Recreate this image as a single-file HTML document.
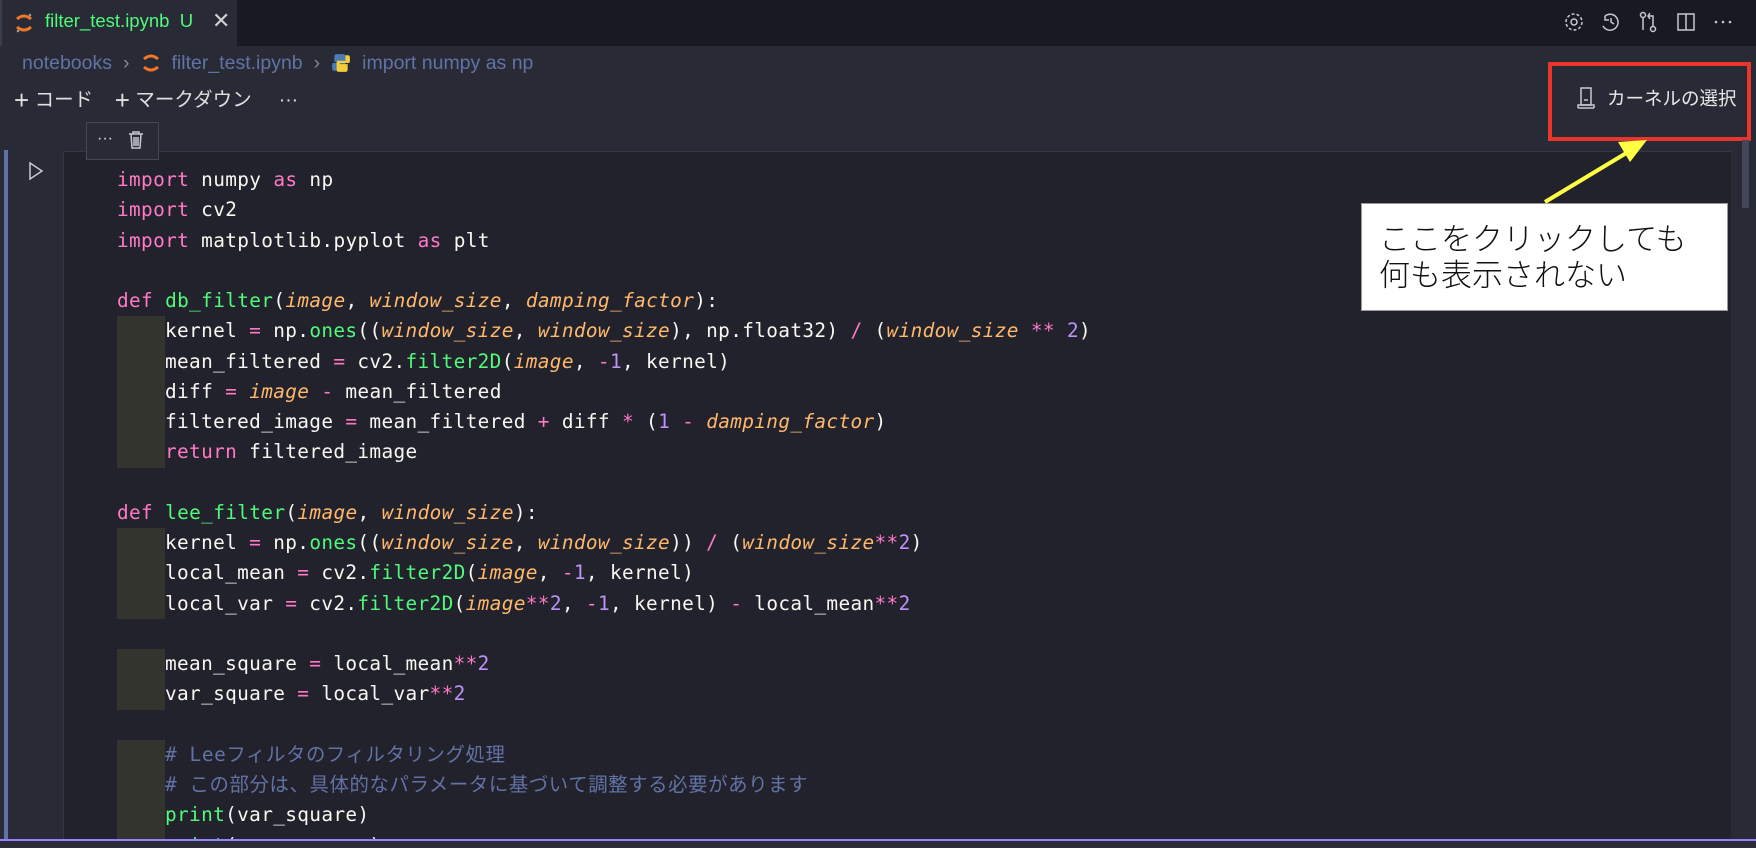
<!DOCTYPE html>
<html><head><meta charset="utf-8"><style>
*{margin:0;padding:0;box-sizing:border-box}
body{width:1756px;height:848px;overflow:hidden;background:#282a36;position:relative;font-family:"Liberation Sans","Noto Sans CJK JP",sans-serif;color:#f8f8f2}
.abs{position:absolute}
#tabbar{left:0;top:0;width:1756px;height:46px;background:#191a21}
#tab{left:0;top:0;width:237px;height:46px;background:#282a36;border-left:2px solid #3a3c4e}
#clip{position:absolute;left:0;top:0;width:1756px;height:839px;overflow:hidden}
pre{position:absolute;left:117px;top:165px;font-family:"DejaVu Sans Mono","Liberation Mono","Noto Sans CJK JP",monospace;font-size:19.4px;line-height:30.25px;color:#f8f8f2;letter-spacing:0.35px}
.k{color:#ff79c6}.f{color:#50fa7b}.p{color:#ffb86c;font-style:italic}.n{color:#bd93f9}.c{color:#6272a4;font-family:"DejaVu Sans Mono","Noto Sans CJK JP",monospace;letter-spacing:0.6px}
.i{background:#34342f;display:inline-block;width:48px;height:30.25px;vertical-align:top}
.ic{stroke:#c5c8d3;fill:none;stroke-width:1.5}
.bc{display:flex;align-items:center;white-space:nowrap}
.bc span{margin-right:11px}
.bc svg{margin-right:11px}
</style></head><body>
<div id="tabbar" class="abs"></div>
<div id="tab" class="abs"></div>
<svg class="abs" style="left:14px;top:12px" width="20" height="22" viewBox="0 0 20 22"><path d="M3 7 Q10 1 17 7" stroke="#f37726" stroke-width="3" fill="none"/><path d="M3 15 Q10 21 17 15" stroke="#f37726" stroke-width="3" fill="none"/><circle cx="16" cy="3" r="1.3" fill="#999"/><circle cx="4" cy="19" r="1.3" fill="#999"/></svg>
<div class="abs" style="left:45px;top:10px;font-size:18.5px;color:#50fa7b">filter_test.ipynb&nbsp; U</div>
<div class="abs" style="left:212px;top:8px;font-size:22px;color:#d0d0d0">✕</div>
<svg class="abs" style="left:1562px;top:10px" width="180" height="24" viewBox="0 0 180 24">
<circle cx="12" cy="12" r="3" class="ic"/><circle cx="12" cy="12" r="8" class="ic" stroke-dasharray="3 2"/>
<path d="M43 6 A8 8 0 1 1 41 16 M43 6 L43 10 L47 10 M49 8 L49 12 L52 14" class="ic"/>
<circle cx="81" cy="5" r="2.5" class="ic"/><circle cx="91" cy="19" r="2.5" class="ic"/><path d="M81 8 V20 M91 16 V6 H86 M88 3 L86 6 L88 9" class="ic"/>
<rect x="116" y="4" width="16" height="16" class="ic"/><path d="M124 4 V20" class="ic"/>
<circle cx="154" cy="12" r="1.3" fill="#c5c8d3"/><circle cx="161" cy="12" r="1.3" fill="#c5c8d3"/><circle cx="168" cy="12" r="1.3" fill="#c5c8d3"/>
</svg>
<div class="abs bc" style="left:22px;top:51px;height:24px;font-size:19.5px;color:#6272a4">
<span>notebooks</span><span style="color:#888">›</span>
<svg width="20" height="22" viewBox="0 0 20 22"><path d="M3 7 Q10 1 17 7" stroke="#f37726" stroke-width="3" fill="none"/><path d="M3 15 Q10 21 17 15" stroke="#f37726" stroke-width="3" fill="none"/></svg>
<span>filter_test.ipynb</span><span style="color:#888">›</span>
<svg width="20" height="20" viewBox="0 0 18 18"><path d="M9 1 H5 Q3 1 3 3 V8 H10 V9 H2 Q1 9 1 11 V14 Q1 16 3 16 H5 V11 H12 Q13 11 13 9 V3 Q13 1 11 1Z" fill="#4b7bb5"/><path d="M9 17 H13 Q15 17 15 15 V10 H8 V9 H16 Q17 9 17 7 V4 Q17 2 15 2 H13 V7 H6 Q5 7 5 9 V15 Q5 17 7 17Z" fill="#f5cd3a"/></svg>
<span>import numpy as np</span></div>
<div class="abs" style="left:14px;top:83px;font-size:19.5px;color:#e0e0e0;white-space:nowrap"><span style="font-size:26px;font-weight:300;vertical-align:-3px">+</span> コード&nbsp;&nbsp;&nbsp; <span style="font-size:26px;font-weight:300;vertical-align:-3px">+</span> マークダウン&nbsp;&nbsp;&nbsp;&nbsp; ···</div>
<svg class="abs" style="left:1576px;top:86px" width="20" height="24" viewBox="0 0 20 24"><rect x="5" y="2" width="10" height="17" class="ic"/><path d="M2 22 H18 M2 22 V19 H18 V22 M8 14 H12" class="ic"/></svg>
<div class="abs" style="left:1607px;top:85px;font-size:18.5px;color:#e8e8e8">カーネルの選択</div>
<div class="abs" style="left:1548px;top:62px;width:203px;height:79px;border:4px solid #e8362b"></div>
<div id="clip">
<div class="abs" style="left:4px;top:150px;width:4px;height:690px;background:#6272a4"></div>
<div class="abs" style="left:63px;top:151px;width:1668px;height:689px;background:#21222c;border-top:1px solid #343746;border-left:1px solid #343746"></div>
<pre><span class="k">import</span> numpy <span class="k">as</span> np
<span class="k">import</span> cv2
<span class="k">import</span> matplotlib.pyplot <span class="k">as</span> plt

<span class="k">def</span> <span class="f">db_filter</span>(<span class="p">image</span>, <span class="p">window_size</span>, <span class="p">damping_factor</span>):
<span class="i"></span>kernel <span class="k">=</span> np.<span class="f">ones</span>((<span class="p">window_size</span>, <span class="p">window_size</span>), np.float32) <span class="k">/</span> (<span class="p">window_size</span> <span class="k">**</span> <span class="n">2</span>)
<span class="i"></span>mean_filtered <span class="k">=</span> cv2.<span class="f">filter2D</span>(<span class="p">image</span>, <span class="k">-</span><span class="n">1</span>, kernel)
<span class="i"></span>diff <span class="k">=</span> <span class="p">image</span> <span class="k">-</span> mean_filtered
<span class="i"></span>filtered_image <span class="k">=</span> mean_filtered <span class="k">+</span> diff <span class="k">*</span> (<span class="n">1</span> <span class="k">-</span> <span class="p">damping_factor</span>)
<span class="i"></span><span class="k">return</span> filtered_image

<span class="k">def</span> <span class="f">lee_filter</span>(<span class="p">image</span>, <span class="p">window_size</span>):
<span class="i"></span>kernel <span class="k">=</span> np.<span class="f">ones</span>((<span class="p">window_size</span>, <span class="p">window_size</span>)) <span class="k">/</span> (<span class="p">window_size</span><span class="k">**</span><span class="n">2</span>)
<span class="i"></span>local_mean <span class="k">=</span> cv2.<span class="f">filter2D</span>(<span class="p">image</span>, <span class="k">-</span><span class="n">1</span>, kernel)
<span class="i"></span>local_var <span class="k">=</span> cv2.<span class="f">filter2D</span>(<span class="p">image</span><span class="k">**</span><span class="n">2</span>, <span class="k">-</span><span class="n">1</span>, kernel) <span class="k">-</span> local_mean<span class="k">**</span><span class="n">2</span>

<span class="i"></span>mean_square <span class="k">=</span> local_mean<span class="k">**</span><span class="n">2</span>
<span class="i"></span>var_square <span class="k">=</span> local_var<span class="k">**</span><span class="n">2</span>

<span class="i"></span><span class="c"># Leeフィルタのフィルタリング処理</span>
<span class="i"></span><span class="c"># この部分は、具体的なパラメータに基づいて調整する必要があります</span>
<span class="i"></span><span class="f">print</span>(var_square)
<span class="i"></span><span class="f">print</span>(mean_square)</pre>
</div>
<div class="abs" style="left:86px;top:122px;width:73px;height:38px;background:#282a36;border:1px solid #44475a;font-size:16px;color:#ddd;padding:7px 0 0 10px">···&nbsp;&nbsp;</div>
<svg class="abs" style="left:128px;top:130px" width="16" height="20" viewBox="0 0 16 20"><path d="M1 4 H15 M5 4 V2 H11 V4 M3 4 L4 18 H12 L13 4 M6 7 V16 M8 7 V16 M10 7 V16" class="ic" stroke="#ddd"/></svg>
<svg class="abs" style="left:28px;top:161px" width="16" height="20" viewBox="0 0 16 20"><path d="M2 2 L14 10 L2 18Z" class="ic" stroke="#ddd"/></svg>
<div class="abs" style="left:1742px;top:140px;width:7px;height:68px;background:#44475a"></div>
<div class="abs" style="left:0;top:839px;width:1756px;height:2px;background:#9580ff"></div>
<div class="abs" style="left:0;top:841px;width:1756px;height:7px;background:#2b2c36"></div>
<div class="abs" style="left:1361px;top:203px;width:367px;height:108px;background:#fff;border:1px solid #999;color:#111;font-size:31px;line-height:36px;padding:15px 0 0 17px;font-family:'Noto Sans CJK JP',sans-serif;font-weight:300">ここをクリックしても<br>何も表示されない</div>
<svg class="abs" style="left:1530px;top:130px" width="130" height="80" viewBox="0 0 130 80"><line x1="15" y1="72" x2="98" y2="22" stroke="#ffff44" stroke-width="4"/><path d="M117 10 L88 12 L100 32Z" fill="#ffff44"/></svg>
</body></html>
